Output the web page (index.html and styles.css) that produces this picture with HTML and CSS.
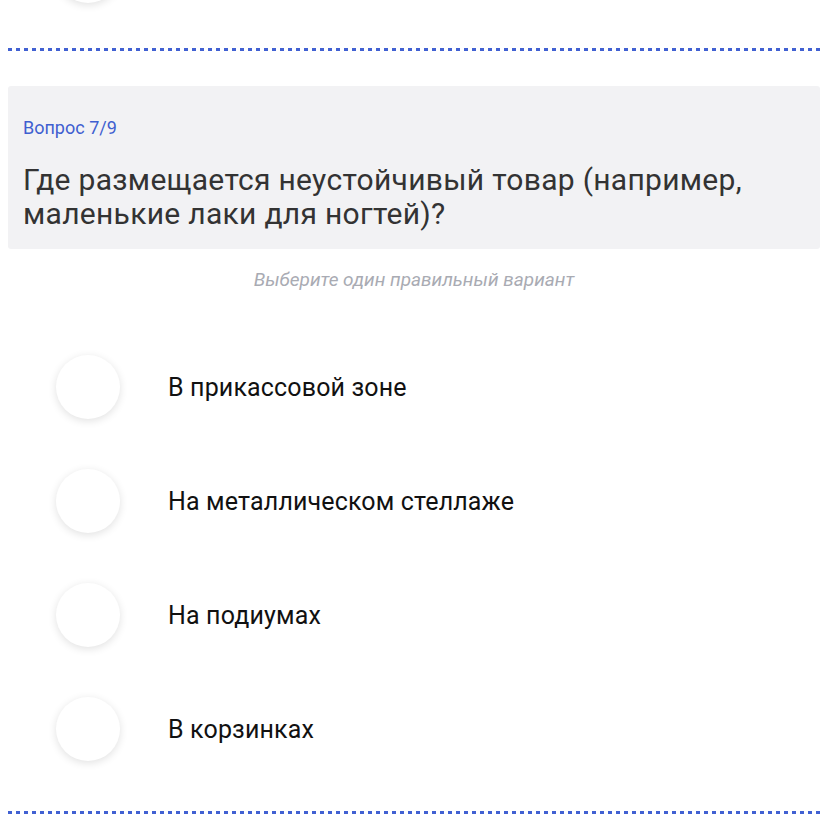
FILE: index.html
```html
<html>
<head>
  <meta charset="utf-8">
  <link rel="stylesheet" href="styles.css">
</head>
<body>
  <div class="page">
    <div class="prev-option"><span class="radio"></span></div>
    <div class="divider"></div>

    <div class="question-card">
      <div class="question-counter">Вопрос 7/9</div>
      <div class="question-text">Где размещается неустойчивый товар (например, маленькие лаки для ногтей)?</div>
    </div>

    <div class="hint">Выберите один правильный вариант</div>

    <ul class="options">
      <li class="option"><span class="radio"></span><span class="option-label">В прикассовой зоне</span></li>
      <li class="option"><span class="radio"></span><span class="option-label">На металлическом стеллаже</span></li>
      <li class="option"><span class="radio"></span><span class="option-label">На подиумах</span></li>
      <li class="option"><span class="radio"></span><span class="option-label">В корзинках</span></li>
    </ul>

    <div class="divider divider-bottom"></div>
  </div>
</body>
</html>
```

FILE: styles.css
```css
body {
  margin: 0;
  background: #ffffff;
  font-family: Roboto, 'Noto Sans', sans-serif;
}

.page {
  display: flex;
  flex-direction: column;
  padding: 0 8px;
  overflow: hidden;
  height: 824px;
  box-sizing: border-box;
}

/* last answer of the previous question, scrolled mostly out of view */
.prev-option {
  height: 48px;
  padding-left: 48px;
}

.prev-option .radio {
  margin-top: -61px;
}

.divider {
  height: 3px;
  background-image: repeating-linear-gradient(to right, #4161d2 0, #4161d2 4px, transparent 4px, transparent 8px);
}

.question-card {
  margin-top: 35px;
  background-color: #f2f2f4;
  border-radius: 3px;
  padding: 32px 15px 18px;
}

.question-counter {
  font-size: 18px;
  line-height: 20px;
  color: #3f5fd0;
}

.question-text {
  margin-top: 25px;
  font-size: 30px;
  line-height: 34px;
  letter-spacing: 0.3px;
  color: #333333;
}

.hint {
  margin-top: 21px;
  text-align: center;
  font-size: 19px;
  line-height: 20px;
  font-style: italic;
  color: #a9abb3;
}

.options {
  list-style: none;
  margin: 65px 0 0;
  padding: 0 0 0 48px;
  display: flex;
  flex-direction: column;
  gap: 50px;
}

.option {
  display: flex;
  align-items: center;
  gap: 48px;
  height: 64px;
}

.radio {
  display: block;
  flex: none;
  width: 64px;
  height: 64px;
  border-radius: 50%;
  background: #ffffff;
  box-shadow: 0 2px 8px rgba(0, 0, 0, 0.12);
}

.option-label {
  font-size: 25px;
  letter-spacing: 0.15px;
  color: #111111;
}

.divider-bottom {
  margin-top: 50px;
}
```
